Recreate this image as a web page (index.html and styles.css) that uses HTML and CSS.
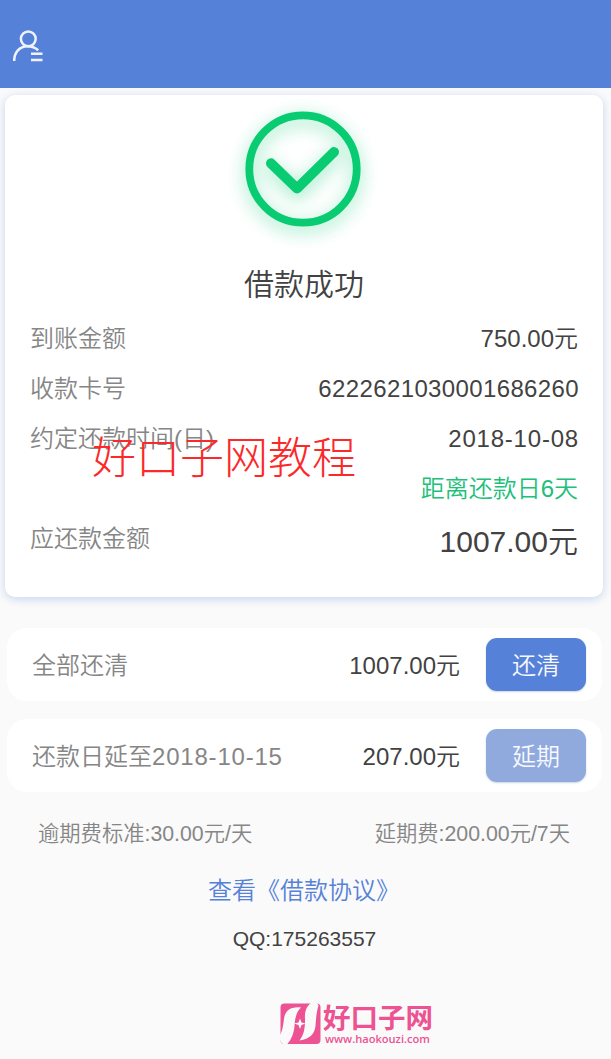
FILE: index.html
```html
<!DOCTYPE html>
<html lang="zh-CN">
<head>
<meta charset="utf-8">
<title>借款成功</title>
<link rel="stylesheet" href="styles.css">
</head>
<body>
<header class="topbar">
  <svg class="user-icon" width="34" height="36" viewBox="0 0 34 36" fill="none" stroke="#eef3fb" stroke-width="2.5">
    <circle cx="17.300" cy="9.800" r="7.400"/>
    <path d="M3.200 32C3.200 23.500 8.500 17.200 16.500 17.200c4.200 0 7.800 1.400 10.700 4M20 24.700h11.500M20 31h11.500"/>
  </svg>
</header>
<main class="page">
  <section class="card">
    <svg class="success-icon" width="160" height="160" viewBox="0 0 160 160" fill="none" stroke="#08cb72">
      <circle cx="80" cy="80" r="53.700" stroke-width="7.800"/>
      <path d="M48 74.300L74 99.500L111 63" stroke-width="10" stroke-linecap="round" stroke-linejoin="round"/>
    </svg>
    <h1 class="title">借款成功</h1>
    <dl class="details">
      <div class="row"><dt>到账金额</dt><dd>750.00元</dd></div>
      <div class="row"><dt>收款卡号</dt><dd class="account">6222621030001686260</dd></div>
      <div class="row"><dt>约定还款时间(日)</dt><dd class="date">2018-10-08</dd></div>
      <div class="row row-end"><dd class="remaining">距离还款日6天</dd></div>
      <div class="row"><dt>应还款金额</dt><dd class="total">1007.00元</dd></div>
    </dl>
    <div class="watermark">好口子网教程</div>
  </section>
  <section class="option">
    <span class="option-label">全部还清</span>
    <span class="amount">1007.00元</span>
    <button class="btn">还清</button>
  </section>
  <section class="option">
    <span class="option-label">还款日延至<span class="date">2018-10-15</span></span>
    <span class="amount">207.00元</span>
    <button class="btn btn-muted">延期</button>
  </section>
  <div class="fees"><span>逾期费标准:30.00元/天</span><span>延期费:200.00元/7天</span></div>
  <a class="agreement">查看《借款协议》</a>
  <p class="qq">QQ:175263557</p>
  <footer class="brand">
    <svg width="41" height="42" viewBox="0 0 41 42">
      <rect x="0.500" y="0.500" width="40" height="40.500" rx="4" fill="#ed5292"/>
      <path fill="#fafafa" d="M21 4.500C10 3.500 5 8 4 16C3 24 2 29 0 32V37C1 40 3 41.500 7 41.500C12 36 14 29 14.500 23C15 14 17 8 21 4.500ZM31 0C26 4 24.500 9 25 17C25 25 24 32 19.500 37.500C30 36 34.500 31 35.500 23C36 14 37 7 38.500 2.500L37 0Z"/>
      <path fill="#fafafa" d="M20 15.500L21.500 19.500L25.500 20.500L21.500 22L20 26L18.500 22L14 20.500L18.500 19.500Z"/>
    </svg>
    <div class="brand-text"><span class="brand-name">好口子网</span><span class="brand-url">www.haokouzi.com</span></div>
  </footer>
</main>
</body>
</html>
```
FILE: styles.css
```css
* { box-sizing: border-box; margin: 0; padding: 0; }
body {
  height: 1059px;
  overflow: hidden;
  background: #fafafa;
  font-family: "Liberation Sans", "Noto Sans CJK SC", sans-serif;
  font-size: 24px;
  font-weight: 350;
  line-height: 36px;
  color: #424242;
  white-space: nowrap;
}
.topbar { height: 88px; padding: 29px 0 0 11px; background: #5681d8; }
.user-icon { display: block; }
.page { display: flex; flex-direction: column; }
.card {
  position: relative;
  height: 502px;
  margin: 7px 8px 0 5px;
  background: #fff;
  border-radius: 10px;
  box-shadow: 0 2px 10px #c5d4ee;
}
.success-icon {
  display: block;
  margin: -6px auto 0;
  position: relative;
  left: -1px;
  filter: drop-shadow(0 5px 9px rgba(8, 203, 114, .48));
}
.title { height: 45px; margin-top: 13px; font-size: 30px; line-height: 45px; font-weight: 350; text-align: center; }
.details { padding: 7px 25px 0 25px; }
.row { display: flex; justify-content: space-between; align-items: center; height: 50px; }
.row-end { justify-content: flex-end; }
.row dt, .option-label { color: #868686; }
.account { letter-spacing: .37px; margin-right: -1px; }
.date { letter-spacing: .8px; margin-right: -1px; }
.remaining { color: #20bf7a; }
.total { font-size: 30px; margin-top: 6px; }
.watermark {
  position: absolute;
  left: 87px;
  top: 334px;
  font-size: 44px;
  font-weight: 300;
  line-height: 60px;
  color: #fb2929;
}
.option {
  display: flex;
  align-items: center;
  height: 73px;
  margin: 31px 9px 0 7px;
  padding: 0 16px 0 25px;
  background: #fff;
  border-radius: 20px;
}
.option + .option { margin-top: 18px; }
.option-label, .amount { padding-top: 2px; }
.amount { margin-left: auto; }
.btn {
  width: 100px;
  height: 53px;
  margin-left: 26px;
  border: 0;
  border-radius: 11px;
  background: #5681d8;
  box-shadow: 0 1px 2px #ccd4e2;
  color: #f7f9ff;
  font: inherit;
  padding-top: 2px;
}
.btn-muted { background: #90aade; }
.fees { display: flex; justify-content: space-between; margin-top: 24px; padding: 0 41px 0 38px; font-size: 21.3px; color: #868686; }
.agreement { align-self: center; margin: 21px 0 0 -3px; color: #5681d8; }
.qq { align-self: center; margin: 12px 0 0 -2px; font-size: 21px; }
.brand { display: flex; margin: 46px 0 0 280px; color: #ed5292; gap: 2px; }
.brand-text { display: flex; flex-direction: column; }
.brand-name { font-size: 27.500px; font-weight: 700; line-height: 31px; height: 28px; }
.brand-url { font-family: "Open Sans", sans-serif; font-size: 11.1px; font-weight: 600; line-height: 15px; padding-left: 2px; }
```
